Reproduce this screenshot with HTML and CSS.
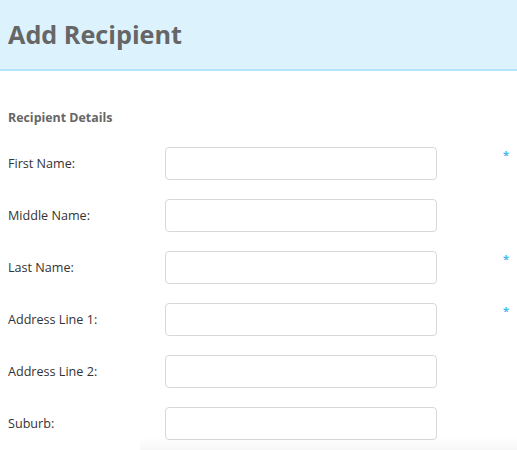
FILE: index.html
```html
<!DOCTYPE html>
<html>
<head>
<meta charset="utf-8">
<link rel="stylesheet" href="styles.css">
</head>
<body>
<header class="page-header">
  <h1 class="page-title">Add Recipient</h1>
</header>
<main class="content">
  <h2 class="section-title">Recipient Details</h2>
  <form class="form">
    <div class="row"><label class="label">First Name:</label><input class="field" type="text"><span class="req">*</span></div>
    <div class="row"><label class="label">Middle Name:</label><input class="field" type="text"><span class="req"></span></div>
    <div class="row"><label class="label">Last Name:</label><input class="field" type="text"><span class="req">*</span></div>
    <div class="row"><label class="label">Address Line 1:</label><input class="field" type="text"><span class="req">*</span></div>
    <div class="row"><label class="label">Address Line 2:</label><input class="field" type="text"><span class="req"></span></div>
    <div class="row"><label class="label">Suburb:</label><input class="field" type="text"><span class="req"></span></div>
  </form>
</main>
<div class="footer-shadow"></div>
</body>
</html>
```
FILE: styles.css
```css
html, body {
  margin: 0;
  padding: 0;
  background: #fff;
  font-family: "Open Sans", "Liberation Sans", sans-serif;
  overflow: hidden;
  height: 450px;
}
.page-header {
  background: #dcf3fe;
  border-bottom: 2px solid #b5e3f9;
  height: 69px;
  display: flex;
  align-items: center;
  padding: 0 8px;
}
.page-title {
  margin: 0;
  font-size: 25.2px;
  font-weight: 700;
  color: #666;
  position: relative;
  top: -1px;
}
.content {
  padding: 0 8px;
}
.section-title {
  margin: 38px 0 0;
  font-size: 12.4px;
  font-weight: 700;
  color: #666;
  line-height: 18px;
}
.form {
  margin-top: 20px;
  display: flex;
  flex-direction: column;
  gap: 19px;
}
.row {
  display: flex;
  align-items: center;
  height: 33px;
}
.label {
  flex: 0 0 157px;
  font-size: 12.6px;
  color: #333;
}
.field {
  flex: 0 0 272px;
  box-sizing: border-box;
  width: 272px;
  height: 33px;
  border: 1px solid #d8d8d8;
  border-radius: 4px;
  background: #fff;
  margin: 0;
  padding: 0 8px;
}
.req {
  flex: 0 0 auto;
  margin-left: 66px;
  align-self: flex-start;
  margin-top: 3px;
  color: #3fb8f0;
  font-size: 11px;
  font-weight: 700;
  line-height: 10px;
}
.footer-shadow {
  position: absolute;
  left: 140px;
  right: 0;
  top: 436px;
  height: 14px;
  background: linear-gradient(to bottom, rgba(0,0,0,0), rgba(0,0,0,0.03));
}
```
